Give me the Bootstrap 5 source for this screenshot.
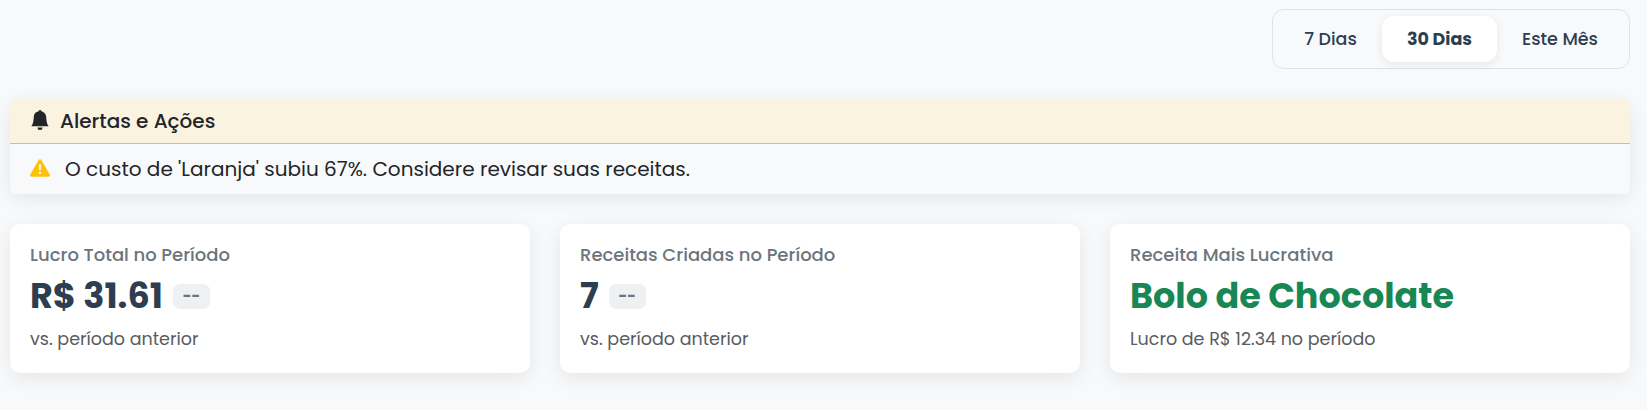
<!DOCTYPE html>
<html lang="pt-BR">
<head>
<meta charset="utf-8">
<meta name="viewport" content="width=device-width, initial-scale=1">
<title>Painel</title>
<link href="https://cdn.jsdelivr.net/npm/bootstrap@5.3.0/dist/css/bootstrap.min.css" rel="stylesheet">
<style>
html{font-size:20px}
body{background:#f8f9fb;color:#212529;font-family:Poppins,Inter,sans-serif;min-height:100vh}
.page{padding:9px 17px 0 10px}
.period{border:1px solid #dee2e6;border-radius:12px;padding:6px;height:60px;width:358px}
.period .btn{font-size:17.5px;font-weight:500;color:#2c3e50;border:0;border-radius:12px;padding:0;height:46px;line-height:46px}
.period .btn.active{background:#fff;color:#2c3e50;font-weight:700;box-shadow:0 2px 8px rgba(0,0,0,.08)}
.b1{width:103px}.b2{width:115px}.b3{width:126px}
.soft{box-shadow:0 5px 20px rgba(0,0,0,.08);border:0}
.alerts{background:#f8f9fb;border-radius:7px;margin-top:30px;height:95px}
.alerts svg{margin-bottom:2px}
.alerts .card-header{background:#faf3e0;border-bottom:1px solid #ffc107;border-radius:7px 7px 0 0;height:45px;padding:0 20px;font-weight:500;font-size:20px}
.alerts .card-header .t{margin-left:10px}
.alerts .card-body{padding:0 20px;font-size:20px}
.alerts .card-body .t{margin-left:15px}
.stats{display:grid;grid-template-columns:repeat(3,1fr);gap:30px;margin-top:30px}
.stat{border-radius:10px;height:149px;padding:20px}
.stat-title{font-size:18px;font-weight:500;color:#6c757d;line-height:22px;margin:0 0 9px}
.stat-value{font-size:35px;font-weight:700;color:#2c3e50;line-height:41px;margin:0 0 10px}
.stat-note{font-size:17.5px;color:#595c5f;line-height:26px;margin:0}
.delta{width:37px;height:25px;border-radius:7px;background:#eff0f2;color:#6c757d;font-size:15px;font-weight:700;line-height:23px;margin:2px 0 0 10px;text-align:center}
.t{display:inline-block;white-space:nowrap}
</style>
</head>
<body>
<main class="page">
  <div class="d-flex justify-content-end">
    <div class="period d-flex">
      <button class="btn b1"><span class="t">7 Dias</span></button>
      <button class="btn b2 active"><span class="t">30 Dias</span></button>
      <button class="btn b3"><span class="t">Este Mês</span></button>
    </div>
  </div>
  <section class="card alerts soft">
    <div class="card-header d-flex align-items-center">
      <svg width="20" height="20" viewBox="0 0 16 16" fill="currentColor"><path d="M8 16a2 2 0 0 0 2-2H6a2 2 0 0 0 2 2zm.995-14.901a1 1 0 1 0-1.99 0A5.002 5.002 0 0 0 3 6c0 1.098-.5 6-2 7h14c-1.5-1-2-5.902-2-7 0-2.42-1.72-4.44-4.005-4.901z"/></svg>
      <span class="t">Alertas e Ações</span>
    </div>
    <div class="card-body d-flex align-items-center">
      <svg width="20" height="20" viewBox="0 0 512 512" fill="#ffc107"><path d="M256 32c14.2 0 27.3 7.5 34.5 19.8l216 368c7.3 12.4 7.3 27.7 .2 40.1S486.3 480 472 480H40c-14.3 0-27.6-7.7-34.7-20.1s-7-27.8 .2-40.1l216-368C228.7 39.5 241.8 32 256 32zm0 128c-13.3 0-24 10.7-24 24V296c0 13.3 10.7 24 24 24s24-10.7 24-24V184c0-13.3-10.7-24-24-24zm32 224a32 32 0 1 0 -64 0 32 32 0 1 0 64 0z"/></svg>
      <span class="t">O custo de 'Laranja' subiu 67%. Considere revisar suas receitas.</span>
    </div>
  </section>
  <section class="stats">
    <article class="card stat soft">
      <h6 class="stat-title"><span class="t">Lucro Total no Período</span></h6>
      <div class="stat-value d-flex align-items-center"><span class="t">R$ 31.61</span><span class="delta">--</span></div>
      <p class="stat-note"><span class="t">vs. período anterior</span></p>
    </article>
    <article class="card stat soft">
      <h6 class="stat-title"><span class="t">Receitas Criadas no Período</span></h6>
      <div class="stat-value d-flex align-items-center"><span class="t">7</span><span class="delta">--</span></div>
      <p class="stat-note"><span class="t">vs. período anterior</span></p>
    </article>
    <article class="card stat soft">
      <h6 class="stat-title"><span class="t">Receita Mais Lucrativa</span></h6>
      <div class="stat-value text-success"><span class="t">Bolo de Chocolate</span></div>
      <p class="stat-note"><span class="t">Lucro de R$ 12.34 no período</span></p>
    </article>
  </section>
</main>
<script src="https://cdn.jsdelivr.net/npm/bootstrap@5.3.0/dist/js/bootstrap.bundle.min.js"></script>
</body>
</html>
